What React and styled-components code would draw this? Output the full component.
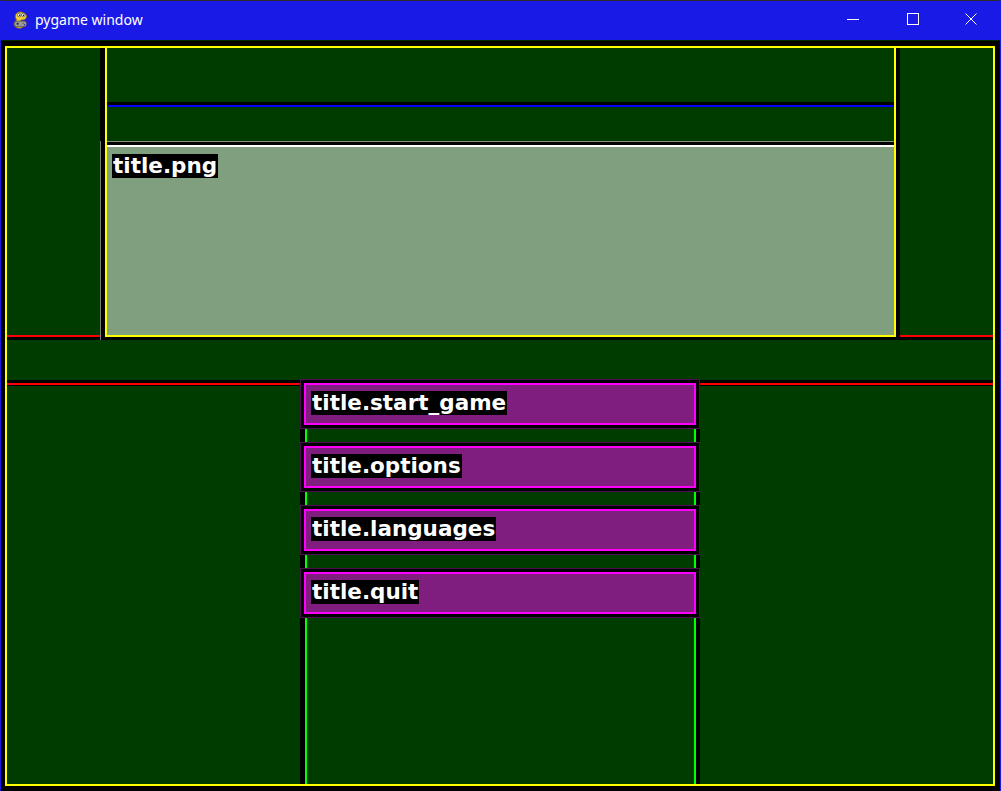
import React from 'react';
import styled, { createGlobalStyle } from 'styled-components';

const GlobalStyle = createGlobalStyle`
  html, body {
    margin: 0;
    padding: 0;
    background: #000;
  }
  * {
    box-sizing: border-box;
  }
`;

const items = ['title.start_game', 'title.options', 'title.languages', 'title.quit'];

function PygameLogo() {
  return (
    <svg width="20" height="20" viewBox="0 0 18 18">
      <path d="M4 7 C3 3 7 1 10 2 C14 3 15 6 13 8 C12 9 10 9 9 9 L9 11 C11 12 12 14 10 16 C7 17 4 16 3 14 C2 12 4 10 5 9 Z" fill="#f2cc3a" stroke="#8a6a10" strokeWidth="0.8" />
      <circle cx="7.5" cy="4.5" r="1.6" fill="#fff" stroke="#333" strokeWidth="0.5" />
      <circle cx="11" cy="4.5" r="1.6" fill="#fff" stroke="#333" strokeWidth="0.5" />
      <circle cx="7.8" cy="4.7" r="0.6" fill="#000" />
      <circle cx="11.2" cy="4.7" r="0.6" fill="#000" />
      <rect x="3" y="10" width="11" height="5" rx="2" fill="#9a9a9a" stroke="#444" strokeWidth="0.6" />
      <rect x="5" y="12" width="2" height="0.8" fill="#222" />
      <rect x="5.6" y="11.4" width="0.8" height="2" fill="#222" />
      <circle cx="11" cy="12" r="0.6" fill="#c22" />
      <circle cx="12.2" cy="13.2" r="0.6" fill="#22c" />
    </svg>
  );
}

function App() {
  return (
    <>
      <GlobalStyle />
      <Window>
        <TitleBar>
          <Caption>
            <PygameLogo />
            <span>pygame window</span>
          </Caption>
          <Controls>
            <CtrlButton aria-label="minimize">
              <svg width="12" height="12" viewBox="0 0 12 12">
                <line x1="0" y1="6.5" x2="12" y2="6.5" stroke="#fff" strokeWidth="1" />
              </svg>
            </CtrlButton>
            <CtrlButton aria-label="maximize">
              <svg width="12" height="12" viewBox="0 0 12 12">
                <rect x="0.5" y="0.5" width="11" height="11" fill="none" stroke="#fff" strokeWidth="1" />
              </svg>
            </CtrlButton>
            <CtrlButton aria-label="close">
              <svg width="12" height="12" viewBox="0 0 12 12">
                <path d="M0.5 0.5 L11.5 11.5 M11.5 0.5 L0.5 11.5" stroke="#fff" strokeWidth="1" />
              </svg>
            </CtrlButton>
          </Controls>
        </TitleBar>

        <Body>
          <Frame>
            <TopRow>
              <SideTop />
              <PanelSlot>
                <Panel>
                  <Strip $h={54} $bg="#003c00" />
                  <Strip $h={3} $bg="#000" />
                  <Strip $h={2} $bg="#0000ff" />
                  <Strip $h={34} $bg="#003c00" />
                  <Strip $h={1} $bg="#8c8c8c" />
                  <Strip $h={3} $bg="#000" />
                  <Strip $h={2} $bg="#ffffff" />
                  <ImageArea>
                    <Label>title.png</Label>
                  </ImageArea>
                </Panel>
              </PanelSlot>
              <SideTop />
            </TopRow>

            <Spacer />

            <BottomRow>
              <SideBottom />
              <MenuColumn>
                {items.map((item, index) => (
                  <React.Fragment key={item}>
                    {index > 0 && <Track $h={13} />}
                    <MenuButton>
                      <MenuFace>
                        <Label>{item}</Label>
                      </MenuFace>
                    </MenuButton>
                  </React.Fragment>
                ))}
                <Track $grow />
              </MenuColumn>
              <SideBottom />
            </BottomRow>
          </Frame>
        </Body>
      </Window>
    </>
  );
}

const Window = styled.div`
  width: 1001px;
  height: 791px;
  display: flex;
  flex-direction: column;
  border: 1px solid #1a1ae6;
  border-top-color: #2b2b2b;
  background: #1a1ae6;
`;

const TitleBar = styled.div`
  height: 39px;
  flex: 0 0 39px;
  display: flex;
  align-items: center;
  justify-content: space-between;
  background: #1a1ae6;
  color: #fff;
  font-family: "Noto Sans", "Open Sans", sans-serif;
  font-size: 14px;
`;

const Caption = styled.div`
  display: flex;
  align-items: center;
  gap: 4px;
  padding-left: 10px;
  padding-bottom: 1px;
  span {
    line-height: 18px;
  }
`;

const Controls = styled.div`
  display: flex;
  align-items: center;
  height: 100%;
`;

const CtrlButton = styled.div`
  width: 58px;
  height: 100%;
  display: flex;
  align-items: center;
  justify-content: center;
  padding-bottom: 4px;
  &:first-child {
    padding-right: 4px;
  }
`;

const Body = styled.div`
  flex: 1;
  background: #000;
  padding: 5px 5px 5px 4px;
  border-top: 1px solid #002800;
`;

const Frame = styled.div`
  width: 990px;
  height: 740px;
  border: 2px solid #ffff00;
  background: #003c00;
  display: flex;
  flex-direction: column;
`;

const TopRow = styled.div`
  display: grid;
  grid-template-columns: 93px 800px 93px;
  height: 292px;
  flex: 0 0 292px;
`;

const SideTop = styled.div`
  background: linear-gradient(to top, #000 0 3px, #ff0000 3px 5px, #003c00 5px);
`;

const PanelSlot = styled.div`
  background:
    linear-gradient(to right, #7a7a7a 0 1px, transparent 1px) 0 93px / 100% 100% no-repeat,
    #000;
  padding-left: 5px;
`;

const Panel = styled.div`
  width: 791px;
  height: 291px;
  margin-top: -2px;
  border: 2px solid #ffff00;
  display: flex;
  flex-direction: column;
  background: #003c00;
`;

const Strip = styled.div`
  flex: 0 0 ${(p) => p.$h}px;
  background: ${(p) => p.$bg};
`;

const ImageArea = styled.div`
  flex: 1;
  background: #7f9f7f;
  padding: 7px 5px;
  display: flex;
  align-items: flex-start;
`;

const Label = styled.span`
  display: inline-block;
  background: #000;
  color: #fff;
  font-family: "DejaVu Sans", "Liberation Sans", sans-serif;
  font-weight: bold;
  font-size: 21.5px;
  line-height: 24px;
  padding: 0 1px;
  white-space: nowrap;
`;

const Spacer = styled.div`
  flex: 0 0 39px;
`;

const BottomRow = styled.div`
  flex: 1;
  display: grid;
  grid-template-columns: 293px 400px 293px;
`;

const SideBottom = styled.div`
  background: linear-gradient(to bottom, #003c00 0 1px, #000 1px 4px, #ff0000 4px 6px, #000 6px 7px, #003c00 7px);
`;

const MenuColumn = styled.div`
  display: flex;
  flex-direction: column;
`;

const Track = styled.div`
  flex: ${(p) => (p.$grow ? '1' : `0 0 ${p.$h}px`)};
  background: #000;
  padding: 0 5px 0 5px;
  &::before {
    content: '';
    display: block;
    height: 100%;
    margin-right: -1px;
    border-left: 2px solid #00ff00;
    border-right: 2px solid #00ff00;
    background: #003c00;
  }
`;

const MenuButton = styled.div`
  flex: 0 0 50px;
  border: 1px solid #4e0c52;
  background: #000;
  padding: 3px;
  display: flex;
`;

const MenuFace = styled.div`
  flex: 1;
  border: 2px solid #ff00ff;
  background: #801e80;
  padding: 6px 5px;
  display: flex;
  align-items: flex-start;
`;

export default App;
